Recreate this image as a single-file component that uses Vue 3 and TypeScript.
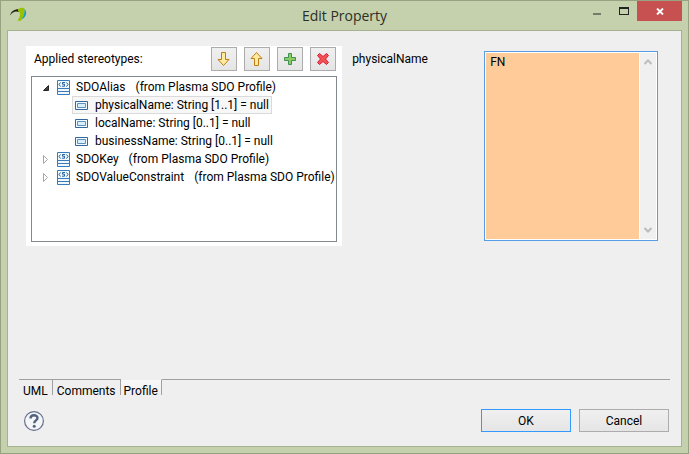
<script setup lang="ts">
import { computed, ref } from 'vue'

interface Stereotype {
  name: string
  profile: string
  open: boolean
  properties: string[]
}

const stereotypes = ref<Stereotype[]>([
  {
    name: 'SDOAlias',
    profile: '(from Plasma SDO Profile)',
    open: true,
    properties: [
      'physicalName: String [1..1] = null',
      'localName: String [0..1] = null',
      'businessName: String [0..1] = null',
    ],
  },
  { name: 'SDOKey', profile: '(from Plasma SDO Profile)', open: false, properties: [] },
  { name: 'SDOValueConstraint', profile: '(from Plasma SDO Profile)', open: false, properties: [] },
])

const selected = ref('physicalName: String [1..1] = null')
const propertyName = computed(() => selected.value.split(':')[0])
const value = ref('FN')
const tabs = ['UML', 'Comments', 'Profile']
const activeTab = ref('Profile')
</script>

<template>
  <div class="window">
    <header class="titlebar">
      <svg class="logo" width="18" height="16" viewBox="0 0 18 16" aria-hidden="true">
        <path d="M0 8.500C1 4.500 4 2 9 2.200L9 5C5.500 3.500 2.500 5 0 8.500z" fill="#20231c" />
        <path d="M8 2.500C9 0.500 14 0 14.500 2C15.500 6 13 11 10.500 14L7.500 13.500C9 11 10.500 9 9.800 6.500C9.500 5 9 4.500 8 4.500z" fill="#9ac100" />
        <path d="M14.500 2C17.500 5 16.500 10 11.500 12.500C13.500 9.500 15 6 14.500 2z" fill="#1a9bc0" />
      </svg>
      <h1 class="title">Edit Property</h1>
      <div class="caption">
        <button class="cap minimize" type="button" aria-label="Minimize">
          <svg width="8" height="2" viewBox="0 0 8 2"><path d="M0 0h8v2H0z" fill="#747b68" /></svg>
        </button>
        <button class="cap" type="button" aria-label="Maximize">
          <svg width="10" height="8" viewBox="0 0 10 8"><path d="M0 0h10v8H0zM1 2v5h8V2z" fill="#222" fill-rule="evenodd" /></svg>
        </button>
        <button class="cap close" type="button" aria-label="Close">
          <svg width="8" height="7" viewBox="0 0 8 7"><path d="M1 0.500l6 6M7 0.500l-6 6" stroke="#fff" stroke-width="1.900" /></svg>
        </button>
      </div>
    </header>

    <main class="body">
      <div class="columns">
        <section class="panel">
          <div class="panel-head">
            <span id="applied">Applied stereotypes:</span>
            <div class="tools">
              <button class="tool" type="button" aria-label="Move down">
                <svg width="14" height="16" viewBox="0 0 14 16"><path d="M4.500 1.500h4v7h3.500L6.500 14.500 1 8.500h3.500z" fill="#ffeaa0" stroke="#bd7f12" stroke-linejoin="round" /></svg>
              </button>
              <button class="tool" type="button" aria-label="Move up">
                <svg width="14" height="16" viewBox="0 0 14 16"><path d="M4.500 14.500h4v-7h3.500L6.500 1.500 1 7.500h3.500z" fill="#ffeaa0" stroke="#bd7f12" stroke-linejoin="round" /></svg>
              </button>
              <button class="tool" type="button" aria-label="Add">
                <svg width="14" height="14" viewBox="0 0 14 14"><path d="M5.500 1.500h3v4h4v3h-4v4h-3v-4h-4v-3h4z" fill="#8ecb60" stroke="#3c9155" stroke-linejoin="round" /></svg>
              </button>
              <button class="tool" type="button" aria-label="Remove">
                <svg width="14" height="14" viewBox="0 0 14 14"><path d="M3.500 1.500L7 4.500l3.500-3 2 2L9.500 7l3 3.500-2 2L7 9.500l-3.500 3-2-2L4.500 7l-3-3.500z" fill="#f25252" stroke="#d91b35" stroke-linejoin="round" /></svg>
              </button>
            </div>
          </div>
          <ul class="tree" role="tree" aria-labelledby="applied">
            <li v-for="s in stereotypes" :key="s.name" role="treeitem" :aria-expanded="s.open">
              <div class="row">
                <button class="twisty" type="button" :aria-label="s.name" @click="s.open = !s.open">
                  <svg v-if="s.open" width="6" height="10" viewBox="0 0 6 10"><path d="M5.500 3.500v5h-5z" fill="#404040" stroke="#262626" /></svg>
                  <svg v-else width="6" height="10" viewBox="0 0 6 10"><path d="M0.500 1.500l4 4-4 4z" fill="#fff" stroke="#a6a6a6" /></svg>
                </button>
                <svg width="13" height="15" viewBox="0 0 13 15" aria-hidden="true">
                  <path d="M0.500 0.500h12v14H0.500z" fill="#eef8fd" stroke="#3b7ab8" />
                  <path d="M0 8.500h13M0 11.500h13" stroke="#3b7ab8" />
                  <path d="M3.500 2.500L2 4.500l1.500 2M9.500 2.500l1.500 2-1.500 2M8 2.500H5.500v1.700h2v2H5" fill="none" stroke="#245f9e" />
                </svg>
                <span class="name">{{ s.name }}</span>
                <span>{{ s.profile }}</span>
              </div>
              <ul v-if="s.open" class="children" role="group">
                <li
                  v-for="p in s.properties"
                  :key="p"
                  class="leaf"
                  :class="{ selected: p === selected }"
                  role="treeitem"
                  @click="selected = p"
                >
                  <svg width="13" height="9" viewBox="0 0 13 9" aria-hidden="true">
                    <path d="M0.500 0.500h12v8H0.500z" fill="#f2fbff" stroke="#33669d" />
                    <path d="M2.500 2.500h8v4h-8z" fill="#d6effa" stroke="#6290bd" />
                  </svg>
                  <span>{{ p }}</span>
                </li>
              </ul>
            </li>
          </ul>
        </section>

        <label class="field-label" for="value">{{ propertyName }}</label>

        <div class="editor">
          <textarea id="value" v-model="value" spellcheck="false"></textarea>
          <div class="scroll">
            <svg width="8" height="6" viewBox="0 0 8 6"><path d="M0.500 5L4 1.500 7.500 5" fill="none" stroke="#bcbcbc" stroke-width="2" /></svg>
            <svg width="8" height="6" viewBox="0 0 8 6"><path d="M0.500 1L4 4.500 7.500 1" fill="none" stroke="#bcbcbc" stroke-width="2" /></svg>
          </div>
        </div>
      </div>

      <nav class="tabs" role="tablist">
        <button
          v-for="t in tabs"
          :key="t"
          class="tab"
          :class="{ active: t === activeTab }"
          type="button"
          role="tab"
          :aria-selected="t === activeTab"
          @click="activeTab = t"
        >{{ t }}</button>
        <span class="rule"></span>
      </nav>

      <footer class="footer">
        <button class="help" type="button" aria-label="Help">
          <svg width="20" height="20" viewBox="0 0 20 20">
            <circle cx="10" cy="10" r="9.400" fill="#f4f5f8" stroke="#62708e" stroke-width="1.200" />
            <path d="M6.500 7.500C6.500 3.300 13.500 3.300 13.500 7C13.500 9.300 10.200 9.500 10.200 12.200" fill="none" stroke="#52637f" stroke-width="2.400" />
            <circle cx="10.200" cy="15.200" r="1.500" fill="#52637f" />
          </svg>
        </button>
        <div class="actions">
          <button class="action primary" type="button">OK</button>
          <button class="action" type="button">Cancel</button>
        </div>
      </footer>
    </main>
  </div>
</template>

<style>
body {
  margin: 0;
}
</style>

<style scoped>
* {
  box-sizing: border-box;
}
.window {
  display: flex;
  flex-direction: column;
  min-height: 100vh;
  padding: 0 6px 6px;
  border: 1px solid #97a283;
  background: #c4d1ac;
  color: #000;
  font: 12px/18px Roboto, "Open Sans", sans-serif;
}
button {
  padding: 0;
  border: 0;
  background: none;
  color: inherit;
  font: inherit;
}
svg {
  display: block;
  flex: none;
}
.titlebar {
  display: grid;
  grid-template-columns: 1fr auto 1fr;
  height: 29px;
}
.logo {
  margin: 6px 0 0 3px;
}
.title {
  margin: 0;
  font: 400 14px/29px "Open Sans", "Noto Sans", sans-serif;
  color: #2c2f26;
}
.caption {
  display: flex;
  justify-content: flex-end;
}
.cap {
  display: flex;
  align-items: center;
  justify-content: center;
  width: 27px;
  height: 20px;
}
.minimize {
  align-items: flex-end;
  padding-bottom: 6px;
}
.close {
  width: 45px;
  background: #c75050;
}
.body {
  display: flex;
  flex: 1;
  flex-direction: column;
  padding: 15px 11px 14px;
  border: 1px solid #a5b18f;
  background: #efefef;
}
.columns {
  display: grid;
  grid-template-columns: minmax(0, 20fr) 142px minmax(0, 11fr);
  padding: 0 12px 0 7px;
}
.panel {
  display: flex;
  flex-direction: column;
  padding: 1px 5px 4px;
  background: #fff;
}
.panel-head {
  display: flex;
  justify-content: space-between;
  align-items: center;
  padding: 0 1px 0 3px;
}
.tools {
  display: flex;
  gap: 7px;
}
.tool {
  display: flex;
  align-items: center;
  justify-content: center;
  width: 26px;
  height: 24px;
  border: 1px solid #acacac;
  background: linear-gradient(#f0f0f0, #e5e5e5);
}
.tree {
  min-height: 166px;
  margin: 5px 0 0;
  padding: 1px 0;
  border: 1px solid #828790;
  list-style: none;
  white-space: nowrap;
}
.row {
  display: flex;
  align-items: center;
  height: 18px;
}
.twisty {
  margin: 0 8px 0 11px;
}
.name {
  margin: 0 10px 0 6px;
}
.children {
  display: flex;
  flex-direction: column;
  align-items: flex-start;
  margin: 0;
  padding: 0 0 0 40px;
  list-style: none;
}
.leaf {
  display: flex;
  align-items: center;
  gap: 7px;
  height: 18px;
  padding: 0 2px;
  border: 1px solid transparent;
}
.leaf.selected {
  border-color: #dadada;
  background: #f7f7f7;
}
.field-label {
  padding: 4px 0 0 10px;
}
.editor {
  display: flex;
  gap: 1px;
  align-self: start;
  height: 190px;
  margin-top: 5px;
  padding: 1px;
  border: 1px solid #569de5;
  background: #fff;
}
.editor textarea {
  flex: 1;
  min-width: 0;
  padding: 0 4px;
  border: 0;
  outline: 0;
  background: #ffcc99;
  color: #000;
  font: inherit;
  resize: none;
}
.scroll {
  display: flex;
  flex-direction: column;
  justify-content: space-between;
  align-items: center;
  width: 16px;
  padding: 6px 0;
  background: #f0f0f0;
}
.tabs {
  display: flex;
  margin-top: auto;
}
.tab {
  height: 16px;
  padding: 3px 4px 0;
  border-top: 1px solid #a0a0a0;
  border-right: 1px solid #a0a0a0;
  line-height: 16px;
}
.tab.active {
  padding: 3px 3px 0;
  border-top-color: transparent;
  background: linear-gradient(#f8f8f8, #efefef);
}
.rule {
  flex: 1;
  border-top: 1px solid #a0a0a0;
}
.footer {
  display: flex;
  justify-content: space-between;
  align-items: center;
  margin-top: 14px;
  padding: 0 1px 0 5px;
}
.actions {
  display: flex;
  gap: 8px;
}
.action {
  width: 90px;
  height: 23px;
  border: 1px solid #acacac;
  background: linear-gradient(#f0f0f0, #e5e5e5);
}
.action.primary {
  border-color: #3399ff;
}
</style>
